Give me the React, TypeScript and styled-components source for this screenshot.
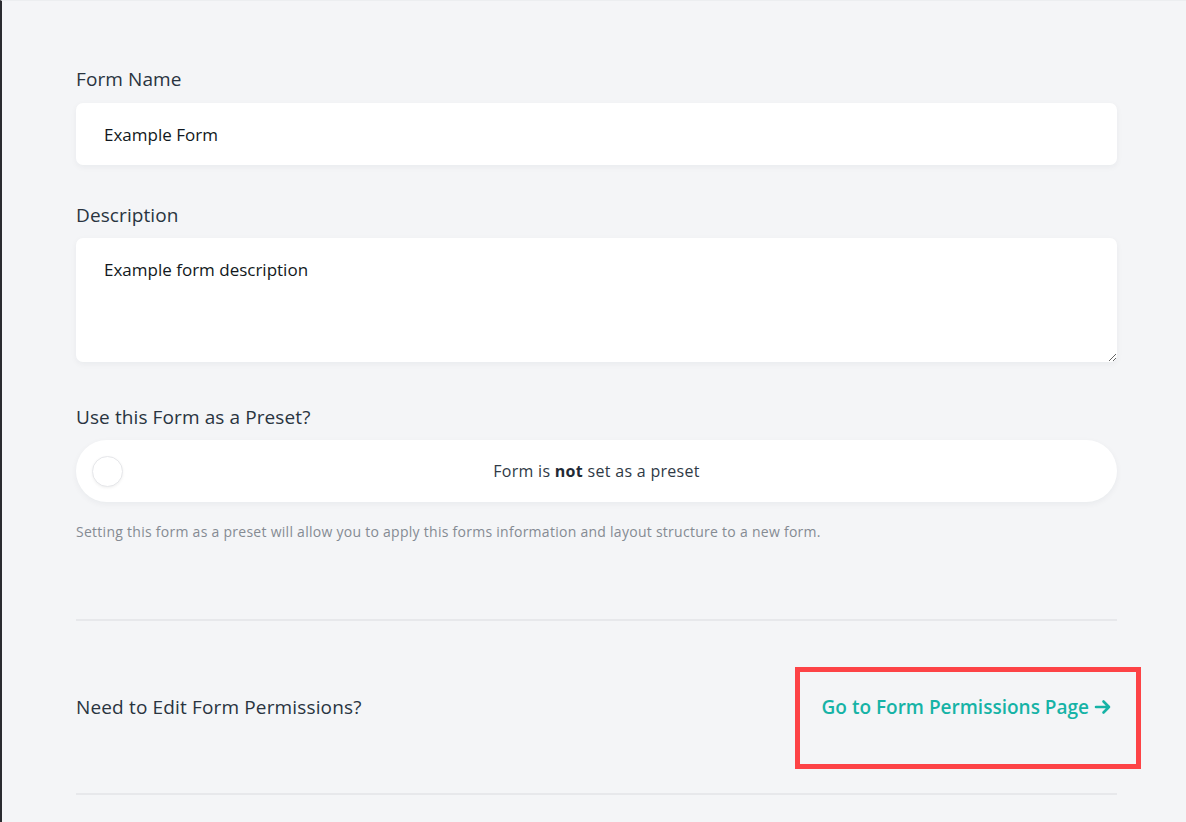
import React from "react";
import styled, { createGlobalStyle } from "styled-components";

const Global = createGlobalStyle`
  html, body { margin: 0; padding: 0; }
  body {
    background: #f4f5f7;
    font-family: "Open Sans", "Noto Sans", sans-serif;
    color: #29343f;
  }
  * { box-sizing: border-box; }
`;

const Page = styled.div`
  min-height: 822px;
  border-left: 2px solid #2a2b30;
  border-top: 1px solid #eceef0;
  padding: 65px 69px 0 74px;
`;

const Field = styled.div<{ $gap: number }>`
  display: flex;
  flex-direction: column;
  margin-bottom: ${(p) => p.$gap}px;
`;

const Label = styled.label<{ $mb: number }>`
  font-size: 19px;
  line-height: 26px;
  letter-spacing: 0.1px;
  color: #29343f;
  margin-bottom: ${(p) => p.$mb}px;
`;

const TextInput = styled.input`
  height: 62px;
  border: none;
  border-radius: 7px;
  background: #fff;
  box-shadow: 0 2px 6px rgba(20, 30, 50, 0.05);
  padding: 0 28px;
  font-family: inherit;
  font-size: 17px;
  color: #111820;
  outline: none;
`;

const TextArea = styled.textarea`
  display: block;
  height: 124px;
  border: none;
  border-radius: 7px;
  background: #fff;
  box-shadow: 0 2px 6px rgba(20, 30, 50, 0.05);
  padding: 21px 28px;
  font-family: inherit;
  font-size: 17px;
  line-height: 22px;
  color: #111820;
  outline: none;
  resize: vertical;
  margin: 0;
`;

const Toggle = styled.div`
  position: relative;
  height: 62px;
  border-radius: 31px;
  background: #fff;
  box-shadow: 0 2px 6px rgba(20, 30, 50, 0.05);
  display: flex;
  align-items: center;
  justify-content: center;
  font-size: 16px;
  letter-spacing: 0.3px;
  color: #2f3a45;
  b { font-weight: 700; color: #1f2a35; }
`;

const Knob = styled.span`
  position: absolute;
  left: 16px;
  top: 16px;
  width: 31px;
  height: 31px;
  border-radius: 50%;
  background: #fff;
  border: 1px solid #e6e7ea;
  box-shadow: 0 1px 3px rgba(0, 0, 0, 0.06);
`;

const Help = styled.p`
  margin: 20px 0 0;
  font-size: 14px;
  line-height: 20px;
  letter-spacing: 0.27px;
  color: #858b93;
`;

const Divider = styled.hr<{ $mt: number }>`
  border: none;
  height: 2px;
  background: #e7e8eb;
  margin: ${(p) => p.$mt}px 0 0;
`;

const PermRow = styled.div`
  height: 172px;
  display: flex;
  align-items: center;
  justify-content: space-between;
`;

const PermText = styled.span`
  font-size: 19px;
  line-height: 26px;
  letter-spacing: 0.15px;
  color: #29343f;
`;

const PermLink = styled.a`
  display: flex;
  align-items: center;
  gap: 5px;
  margin: 22px -24px 0 0;
  border: 5px solid #fd4346;
  padding: 22px 24px 44px 22px;
  font-size: 19px;
  line-height: 26px;
  font-weight: 600;
  color: #16b3a6;
  text-decoration: none;
  white-space: nowrap;
  svg { flex: none; }
`;

export default function App() {
  return (
    <>
      <Global />
      <Page>
        <Field $gap={37}>
          <Label $mb={11}>Form Name</Label>
          <TextInput defaultValue="Example Form" />
        </Field>
        <Field $gap={42}>
          <Label $mb={10}>Description</Label>
          <TextArea defaultValue="Example form description" />
        </Field>
        <Field $gap={0}>
          <Label $mb={10}>Use this Form as a Preset?</Label>
          <Toggle>
            <Knob />
            <span>
              Form is <b>not</b> set as a preset
            </span>
          </Toggle>
          <Help>
            Setting this form as a preset will allow you to apply this forms information and layout structure to a new form.
          </Help>
        </Field>
        <Divider $mt={77} />
        <PermRow>
          <PermText>Need to Edit Form Permissions?</PermText>
          <PermLink href="#">
            Go to Form Permissions Page
            <svg width="18" height="16" viewBox="0 0 18 16" aria-hidden="true">
              <path
                d="M2 8h13M9.5 2.5 15 8l-5.5 5.5"
                fill="none"
                stroke="currentColor"
                strokeWidth="2.6"
                strokeLinecap="round"
                strokeLinejoin="round"
              />
            </svg>
          </PermLink>
        </PermRow>
        <Divider $mt={0} />
      </Page>
    </>
  );
}
